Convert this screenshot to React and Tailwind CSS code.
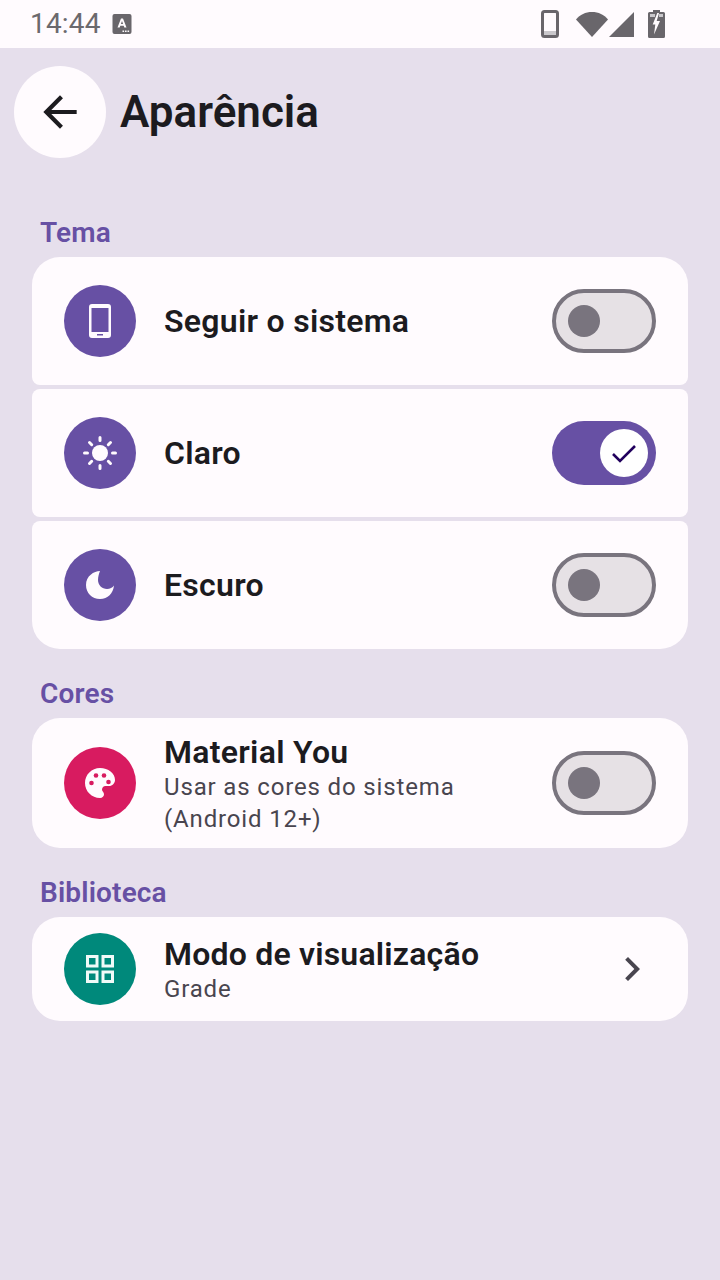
import React from 'react';

const StatusBar = () => (
  <div className="h-12 bg-[#fffbfe] flex items-center justify-between pl-[30px] pr-[55px]">
    <div className="flex items-center gap-[11px]">
      <span className="text-[28px] leading-none text-[#6b696d] tracking-[0.2px]">14:44</span>
      <svg width="20" height="22" viewBox="0 0 20 22">
        <rect x="0.5" y="1" width="19" height="20" rx="2" fill="#69666b" />
        <path d="M5.500 14.500 9 5.500h2l3.500 9h-2.200l-.6-1.800H8.300l-.6 1.800zM8.900 11h2.200L10 7.900z" fill="#fffbfe" />
        <path d="M10.500 17.500h1.600v1.500h-1.600zM13 17.500h1.600v1.500H13zM15.500 17.500h1.600v1.500h-1.600z" fill="#fffbfe" />
      </svg>
    </div>
    <div className="flex items-center">
      <svg width="18" height="28" viewBox="0 0 18 28">
        <rect x="1.500" y="1.500" width="15" height="25" rx="2" fill="none" stroke="#69666b" strokeWidth="3" />
        <rect x="3" y="21" width="12" height="4" fill="#c9c7cb" />
      </svg>
      <svg className="ml-[17px]" width="32" height="26" viewBox="0 0 32 26">
        <path d="M0 8.500C4 3.500 9.500 1 16 1s12 2.500 16 7.500L16 26z" fill="#69666b" />
      </svg>
      <svg className="ml-[1px]" width="25" height="26" viewBox="0 0 25 26">
        <path d="M25 1v25H0z" fill="#69666b" />
      </svg>
      <svg className="ml-[14px]" width="17" height="28" viewBox="0 0 17 28">
        <path d="M5 0h7v2h3.500a1.500 1.500 0 0 1 1.500 1.500v23a1.500 1.500 0 0 1-1.500 1.500h-14A1.500 1.500 0 0 1 0 26.500v-23A1.500 1.500 0 0 1 1.500 2H5z" fill="#69666b" />
        <path d="M2 4h5v3H2zM11 4h4v3h-4z" fill="#c9c7cb" />
        <path d="M9.300 3 4.700 14.500h2.600L6 24.500l6-13.500H8.700L11 3z" fill="#fffbfe" />
      </svg>
    </div>
  </div>
);

const IconCircle = ({ color, children }) => (
  <div className={`w-[72px] h-[72px] rounded-full flex items-center justify-center shrink-0 ${color}`}>
    {children}
  </div>
);

const BackIcon = () => (
  <svg width="50" height="50" viewBox="0 0 24 24" fill="#1c1b1f">
    <path d="M20 11H7.830l5.590-5.590L12 4l-8 8 8 8 1.410-1.410L7.830 13H20v-2z" />
  </svg>
);

const ChevronIcon = () => (
  <svg width="48" height="48" viewBox="0 0 24 24" fill="#49454f" className="shrink-0">
    <path d="M10 6 8.590 7.410 13.170 12l-4.580 4.590L10 18l6-6z" />
  </svg>
);

const PhoneIcon = () => (
  <svg width="22" height="34" viewBox="0 0 22 34">
    <path fillRule="evenodd" d="M3 0h16a3 3 0 0 1 3 3v28a3 3 0 0 1-3 3H3a3 3 0 0 1-3-3V3a3 3 0 0 1 3-3zM2.500 4v24h17V4zM8 30v1.500h6V30z" fill="#fffbfe" />
  </svg>
);

const SunIcon = () => (
  <svg width="34" height="34" viewBox="0 0 34 34" fill="#fffbfe">
    <circle cx="17" cy="17" r="8" />
    <g stroke="#fffbfe" strokeWidth="3" strokeLinecap="round">
      <path d="M17 1.500v3M17 29.500v3M1.500 17h3M29.500 17h3M6.500 6.500l2.200 2.200M25.300 25.300l2.200 2.200M6.500 27.500l2.200-2.200M25.300 8.700l2.200-2.200" />
    </g>
  </svg>
);

const MoonIcon = () => (
  <svg width="28" height="28" viewBox="0 0 28 28">
    <path d="M14 0C8 0 0 5 0 14c0 8 6 14 14 14s13-5.500 14-13.500c-1.500 2-4 3.500-7 3.500-5 0-9-4-9-9 0-3.500 1-6.500 2-9z" fill="#fffbfe" />
  </svg>
);

const PaletteIcon = () => (
  <svg width="30" height="30" viewBox="0 0 30 30">
    <path d="M15 0C6.700 0 0 6.700 0 15s6.700 15 15 15c2.500 0 4-1.700 4-3.700 0-1-.4-1.800-1-2.500-.6-.7-1-1.400-1-2.300 0-1.900 1.500-3.500 3.500-3.500H24c3.300 0 6-2.700 6-6C30 5.400 23.300 0 15 0z" fill="#fffbfe" />
    <circle cx="6.500" cy="15" r="2.300" fill="#d81b60" />
    <circle cx="11" cy="7.500" r="2.300" fill="#d81b60" />
    <circle cx="19" cy="7.500" r="2.300" fill="#d81b60" />
    <circle cx="23.500" cy="14" r="2.300" fill="#d81b60" />
  </svg>
);

const GridIcon = () => (
  <svg width="28" height="28" viewBox="0 0 28 28" fill="none" stroke="#f1faf8" strokeWidth="3">
    <rect x="1.500" y="1.500" width="9.500" height="9.500" />
    <rect x="17" y="1.500" width="9.500" height="9.500" />
    <rect x="1.500" y="17" width="9.500" height="9.500" />
    <rect x="17" y="17" width="9.500" height="9.500" />
  </svg>
);

const Switch = ({ on }) =>
  on ? (
    <div className="w-[104px] h-16 rounded-full bg-[#6750a4] flex items-center justify-end pr-2 shrink-0">
      <div className="w-12 h-12 rounded-full bg-white flex items-center justify-center">
        <svg width="24" height="20" viewBox="0 0 24 20" fill="none" stroke="#21005d" strokeWidth="2.600">
          <path d="M1 11l7 7L23 3" />
        </svg>
      </div>
    </div>
  ) : (
    <div className="w-[104px] h-16 rounded-full bg-[#e6e1e5] border-4 border-[#79747e] flex items-center pl-3 shrink-0">
      <div className="w-8 h-8 rounded-full bg-[#79747e]" />
    </div>
  );

const Label = ({ children, className }) => (
  <div className={`pl-2 text-[28px] leading-8 font-semibold tracking-[0.15px] text-[#6750a4] ${className}`}>{children}</div>
);

const Row = ({ icon, color, title, radius, on }) => (
  <div className={`h-32 bg-[#fffbfe] pl-8 pr-8 flex items-center ${radius}`}>
    <IconCircle color={color}>{icon}</IconCircle>
    <div className="ml-7 flex-1 text-[32px] tracking-[0.28px] font-semibold text-[#1c1b1f]">{title}</div>
    <Switch on={on} />
  </div>
);

export default function App() {
  return (
    <div className="min-h-[1280px] bg-[#e6dfec] font-['Roboto',sans-serif]">
      <StatusBar />
      <div className="pt-[18px] pl-[14px] flex items-center">
        <button className="w-[92px] h-[92px] rounded-full bg-[#fffbfe] flex items-center justify-center">
          <BackIcon />
        </button>
        <h1 className="ml-[14px] text-[44px] leading-none font-semibold text-[#1c1b1f]">Aparência</h1>
      </div>
      <div className="px-8">
        <Label className="mt-[59px] mb-2">Tema</Label>
        <div className="flex flex-col gap-1">
          <Row icon={<PhoneIcon />} color="bg-[#6750a4]" title="Seguir o sistema" radius="rounded-t-[28px] rounded-b-lg" />
          <Row icon={<SunIcon />} color="bg-[#6750a4]" title="Claro" radius="rounded-lg" on />
          <Row icon={<MoonIcon />} color="bg-[#6750a4]" title="Escuro" radius="rounded-b-[28px] rounded-t-lg" />
        </div>
        <Label className="mt-[29px] mb-2">Cores</Label>
        <div className="h-[130px] rounded-[28px] bg-[#fffbfe] px-8 flex items-center">
          <IconCircle color="bg-[#d81b60]"><PaletteIcon /></IconCircle>
          <div className="ml-7 flex-1 pt-[2px]">
            <div className="text-[32px] leading-[37px] tracking-[0.28px] font-semibold text-[#1c1b1f]">Material You</div>
            <div className="text-[24px] leading-8 text-[#49454f] tracking-[0.85px] w-[320px]">Usar as cores do sistema (Android 12+)</div>
          </div>
          <Switch />
        </div>
        <Label className="mt-[29px] mb-2">Biblioteca</Label>
        <div className="h-[104px] rounded-[28px] bg-[#fffbfe] pl-8 flex items-center">
          <IconCircle color="bg-[#00897b]"><GridIcon /></IconCircle>
          <div className="ml-7 flex-1 pt-[2px]">
            <div className="text-[32px] leading-[37px] tracking-[0.2px] font-semibold text-[#1c1b1f]">Modo de visualização</div>
            <div className="text-[24px] leading-8 text-[#49454f] tracking-[0.85px]">Grade</div>
          </div>
          <div className="pr-8"><ChevronIcon /></div>
        </div>
      </div>
    </div>
  );
}
